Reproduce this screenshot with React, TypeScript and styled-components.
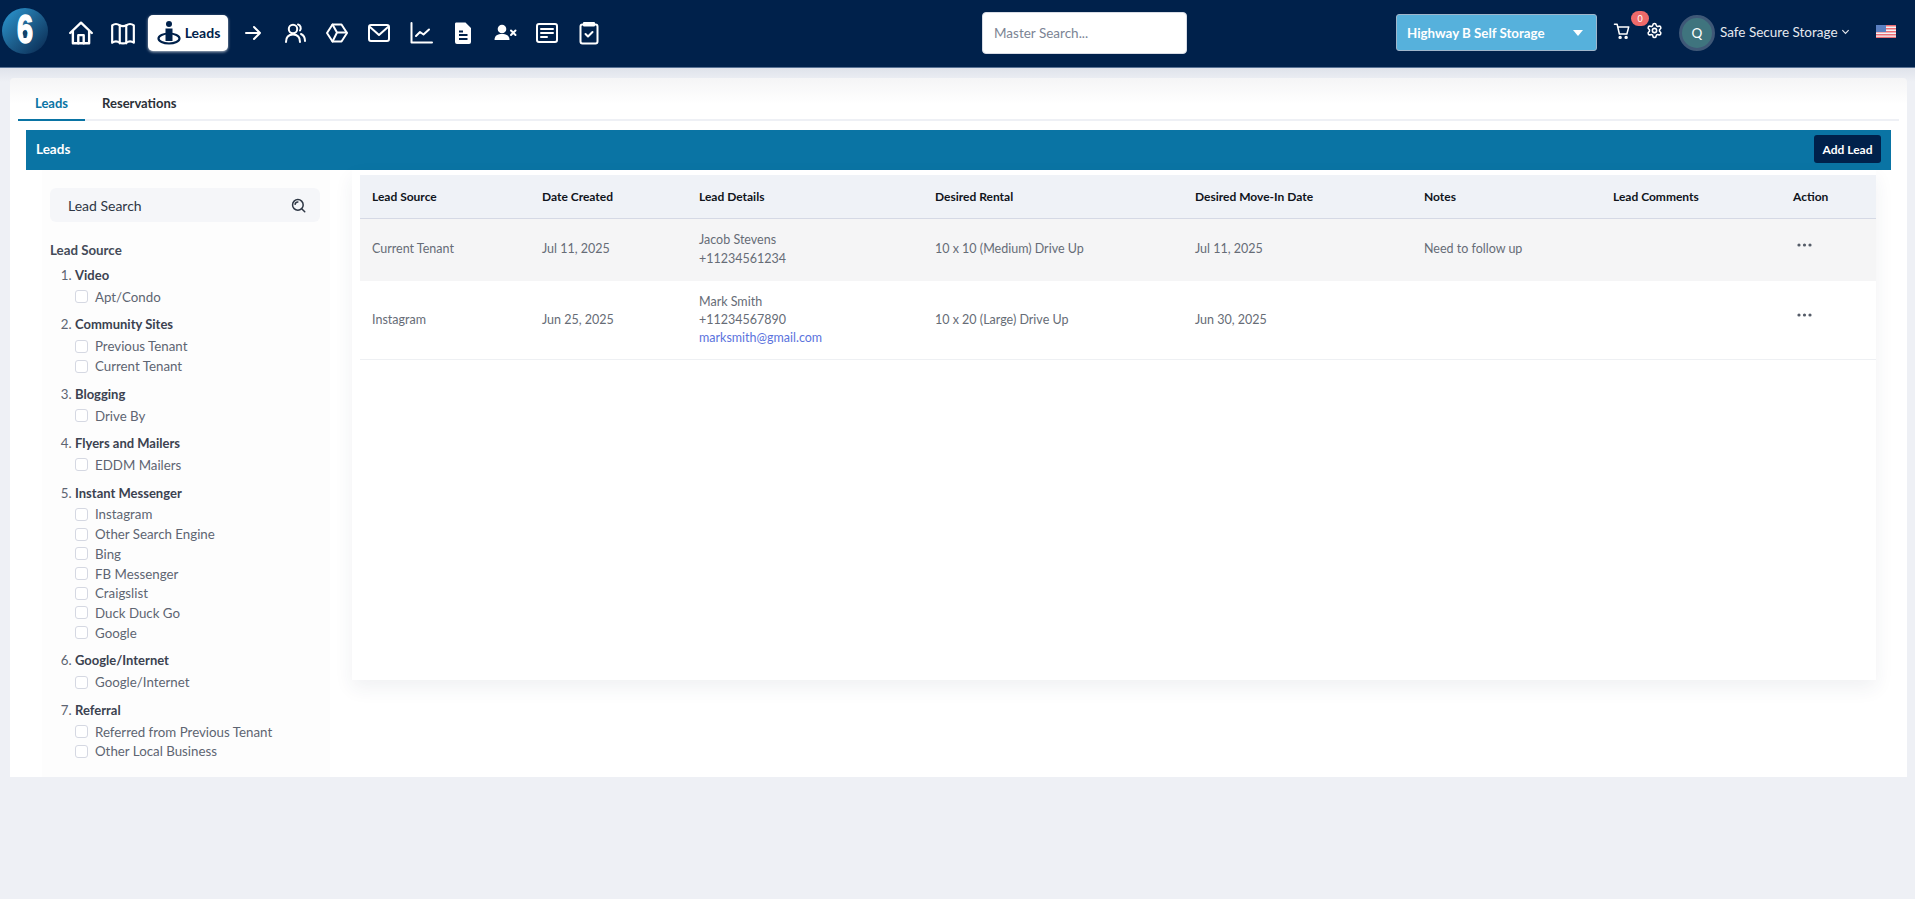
import React from "react";
import styled, { createGlobalStyle } from "styled-components";
import { Settings } from "lucide-react";

const navy = "#00214b";
const font = `"Lato", "Noto Sans", sans-serif`;

const Global = createGlobalStyle`
  html, body { margin: 0; padding: 0; background: #eef0f5; font-family: ${font}; }
  * { box-sizing: border-box; }
`;

const Page = styled.div`
  width: 1915px;
  height: 899px;
  overflow: hidden;
`;

const TopBar = styled.header`
  height: 68px;
  padding-bottom: 2px;
  background: ${navy};
  border-bottom: 1px solid #5a7396;
  display: flex;
  align-items: center;
`;

const Logo = styled.svg`
  width: 48px;
  height: 48px;
  margin-left: 1px;
  margin-top: -3px;
  flex: none;
`;

const IconNav = styled.nav`
  display: flex;
  align-items: center;
  margin-left: 11px;
  width: 549px;
  flex: none;
`;

const NavIcon = styled.span`
  width: 42px;
  height: 36px;
  flex: none;
  display: flex;
  align-items: center;
  justify-content: center;
  color: #fff;
  svg { display: block; }
`;

const LeadsPill = styled.span`
  width: 80px;
  height: 36px;
  margin: 0 4px;
  flex: none;
  border-radius: 5px;
  background: #fff;
  color: ${navy};
  box-shadow: 0 1px 3px rgba(255, 255, 255, 0.7);
  display: flex;
  align-items: center;
  justify-content: center;
  gap: 3px;
  font-size: 14px;
  font-weight: 700;
`;

const SearchField = styled.div`
  width: 205px;
  height: 42px;
  margin-left: 373px;
  flex: none;
  background: #fff;
  border-radius: 4px;
  border: 1px solid #d8dce5;
  display: flex;
  align-items: center;
  padding-left: 11px;
  font-size: 13.5px;
  color: #7b8494;
`;

const SiteSelect = styled.div`
  width: 201px;
  height: 37px;
  margin-left: 209px;
  flex: none;
  border-radius: 3px;
  background: #56b1dc;
  border: 1px solid #9fb6cb;
  display: flex;
  align-items: center;
  justify-content: space-between;
  padding: 0 13px 0 10px;
  color: #fff;
  font-size: 13.3px;
  font-weight: 700;
`;

const Caret = styled.span`
  width: 0;
  height: 0;
  border-left: 5px solid transparent;
  border-right: 5px solid transparent;
  border-top: 6px solid #fff;
`;

const CartWrap = styled.span`
  position: relative;
  margin: -3px 0 0 16px;
  width: 18px;
  height: 18px;
  color: #fff;
  flex: none;
  svg { display: block; }
`;

const Badge = styled.span`
  position: absolute;
  left: 18px;
  top: -11px;
  width: 18px;
  height: 15px;
  border-radius: 8px;
  background: #ef6a6a;
  color: #fff;
  font-size: 9px;
  display: flex;
  align-items: center;
  justify-content: center;
`;

const GearWrap = styled.span`
  margin: -4px 0 0 15px;
  width: 17px;
  height: 17px;
  color: #fff;
  flex: none;
  svg { display: block; }
`;

const Avatar = styled.span`
  margin-left: 16px;
  width: 36px;
  height: 36px;
  border-radius: 50%;
  background: #3f747e;
  border: 3px solid #3f5877;
  color: #fff;
  font-size: 13.5px;
  flex: none;
  display: flex;
  align-items: center;
  justify-content: center;
`;

const UserName = styled.span`
  margin: -2px 0 0 5px;
  width: 118px;
  flex: none;
  color: #e6e9ef;
  font-size: 13.5px;
  white-space: nowrap;
`;

const Chevron = styled.svg`
  margin: -2px 0 0 3px;
  width: 9px;
  height: 9px;
  flex: none;
`;

const Flag = styled.svg`
  margin: -2px 0 0 26px;
  width: 20px;
  height: 13px;
  flex: none;
`;

const Main = styled.main`
  padding: 10px 8px 0 10px;
  background: linear-gradient(#dfe3eb, #eef0f5 14px);
`;

const Card = styled.section`
  background: linear-gradient(#f5f5f6, #fff 26px);
  border-radius: 4px 4px 0 0;
  padding: 12px 8px 0;
  height: 699px;
`;

const Tabs = styled.div`
  display: flex;
  height: 31px;
  border-bottom: 2px solid #eef0f5;
`;

const Tab = styled.div<{ $active?: boolean }>`
  height: 31px;
  padding: 0 17px;
  font-size: 13px;
  font-weight: 700;
  line-height: 26px;
  color: ${(p) => (p.$active ? "#0a74a4" : "#2b3038")};
  border-bottom: 2px solid ${(p) => (p.$active ? "#0a74a4" : "transparent")};
`;

const Bar = styled.div`
  margin: 9px 8px 0;
  height: 40px;
  background: #0a74a4;
  display: flex;
  align-items: center;
  justify-content: space-between;
  padding: 0 10px 2px;
  color: #fff;
  font-size: 13.5px;
  font-weight: 700;
`;

const AddButton = styled.button`
  width: 67px;
  height: 28px;
  border: 0;
  border-radius: 3px;
  background: ${navy};
  color: #fff;
  font: 700 12px ${font};
  padding: 0;
`;

const Body = styled.div`
  display: flex;
  margin: 0 15px 0 8px;
  align-items: flex-start;
`;

const Side = styled.aside`
  width: 288px;
  height: 607px;
  margin-left: 16px;
  padding: 18px 10px 0 8px;
  flex: none;
  background: #fdfdfd;
`;

const LeadSearch = styled.div`
  height: 34px;
  border-radius: 6px;
  background: #f5f6f9;
  display: flex;
  align-items: center;
  justify-content: space-between;
  padding: 0 14px 0 18px;
  font-size: 14px;
  color: #2e3745;
  svg { display: block; }
`;

const SideLabel = styled.div`
  margin-top: 18px;
  font-size: 13.3px;
  line-height: 20px;
  font-weight: 700;
  color: #444b58;
`;

const Sources = styled.ol`
  list-style: decimal;
  margin: 5px 0 0;
  padding: 0 0 0 25px;
  color: #5e6572;
  font-size: 13.3px;
`;

const Source = styled.li`
  margin-bottom: 7.8px;
`;

const SourceName = styled.div`
  line-height: 20px;
  font-size: 13px;
  font-weight: 700;
  color: #3b4250;
`;

const Option = styled.label`
  display: flex;
  align-items: center;
  gap: 7px;
  height: 19.7px;
  color: #5e6572;
  &:first-of-type { margin-top: 2px; }
`;

const Check = styled.span`
  width: 13px;
  height: 13px;
  flex: none;
  border: 1px solid #d5d8e2;
  border-radius: 3px;
  background: #fff;
`;

const TableCard = styled.div`
  margin-left: 22px;
  width: 1524px;
  flex: none;
  height: 510px;
  padding: 5px 0 0 8px;
  background: #fff;
  box-shadow: 0 8px 18px rgba(40, 50, 80, 0.07);
`;

const Table = styled.table`
  width: 1516px;
  table-layout: fixed;
  border-collapse: collapse;
  th:nth-child(1) { width: 170px; }
  th:nth-child(2) { width: 157px; }
  th:nth-child(3) { width: 236px; }
  th:nth-child(4) { width: 260px; }
  th:nth-child(5) { width: 229px; }
  th:nth-child(6) { width: 189px; }
  th:nth-child(7) { width: 180px; }
  th:nth-child(8) { width: 95px; }
`;

const HeadRow = styled.tr`
  height: 43px;
  background: #eff2f7;
  border-bottom: 1px solid #d5d9e5;
`;

const Th = styled.th`
  padding: 0 12px;
  text-align: left;
  font-size: 12px;
  font-weight: 700;
  color: #10141c;
`;

const Row = styled.tr<{ $striped?: boolean; $height: number }>`
  height: ${(p) => p.$height}px;
  background: ${(p) => (p.$striped ? "#f5f5f6" : "#fff")};
  border-bottom: 1px solid ${(p) => (p.$striped ? "transparent" : "#eef0f3")};
`;

const Td = styled.td`
  padding: 0 12px;
  font-size: 12.5px;
  line-height: 18.3px;
  color: #666c76;
`;

const Email = styled.div`
  color: #5b73dd;
`;

const Dots = styled.svg`
  display: block;
  width: 15px;
  height: 4px;
  margin: 0 0 10px 4px;
`;

const stroke = {
  fill: "none",
  stroke: "currentColor",
  strokeWidth: 2,
  strokeLinecap: "round" as const,
  strokeLinejoin: "round" as const,
};

const icons: React.ReactNode[] = [
  <g key="arrow" {...stroke}><path d="M5 12h14M13 6l6 6-6 6" /></g>,
  <g key="users" {...stroke}><circle cx="10" cy="8" r="4.2" /><path d="M3 21c0-5 3-7.5 7-7.5s7 2.5 7 7.5M15 3.5c2.5.6 3.6 3.8 2 6M18 13c2.6 1.2 4 3.5 4 7" /></g>,
  <g key="box" {...stroke}><path d="M7.5 3.5h9L22 12l-5.500 8.500h-9L2 12z" /><path d="M7.500 3.500 12 11.500h9.500M12 11.500 7.500 20.500" /></g>,
  <g key="mail" {...stroke}><rect x="2" y="4" width="20" height="16" rx="2" /><path d="m3 6 9 8 9-8" /></g>,
  <g key="chart" {...stroke}><path d="M2.500 2v19.500H23" /><path d="m7 15 4-4 3.500 2.500L20 8.500" /></g>,
  <g key="file"><path fill="currentColor" d="M5 1.500h9.500L20 7v14a2 2 0 0 1-2 2H6a2 2 0 0 1-2-2V3a1.500 1.500 0 0 1 1-1.500z" /><path stroke={navy} strokeWidth="1.800" d="M8 10.500h4M8 14h8.500M8 18h8.500" /></g>,
  <g key="userx"><circle cx="9" cy="8" r="4.300" fill="currentColor" /><path fill="currentColor" d="M1.500 19c0-4.500 3.300-6 7.500-6s7.500 1.500 7.500 6z" /><path stroke="currentColor" strokeWidth="2" strokeLinecap="round" d="m18 9.500 4.500 4.500m0-4.500L18 14" /></g>,
  <g key="list" {...stroke}><rect x="2" y="3" width="20" height="18" rx="2" /><path d="M6 8h12M6 12h12M6 16h6" /></g>,
  <g key="clip" {...stroke}><rect x="3.500" y="3.500" width="17" height="19" rx="2" /><path d="M7 2h10v2.500H7zM8.500 13l2.500 2.500 4.500-4.500" /></g>,
];

const groups: [string, string[]][] = [
  ["Video", ["Apt/Condo"]],
  ["Community Sites", ["Previous Tenant", "Current Tenant"]],
  ["Blogging", ["Drive By"]],
  ["Flyers and Mailers", ["EDDM Mailers"]],
  ["Instant Messenger", ["Instagram", "Other Search Engine", "Bing", "FB Messenger", "Craigslist", "Duck Duck Go", "Google"]],
  ["Google/Internet", ["Google/Internet"]],
  ["Referral", ["Referred from Previous Tenant", "Other Local Business"]],
];

const columns = ["Lead Source", "Date Created", "Lead Details", "Desired Rental", "Desired Move-In Date", "Notes", "Lead Comments", "Action"];

const MoreDots = () => (
  <Dots viewBox="0 0 15 4">
    <circle cx="2" cy="2" r="1.600" fill="#555c68" />
    <circle cx="7.500" cy="2" r="1.600" fill="#555c68" />
    <circle cx="13" cy="2" r="1.600" fill="#555c68" />
  </Dots>
);

export default function App() {
  return (
    <Page>
      <Global />
      <TopBar>
        <Logo viewBox="0 0 48 48">
          <defs>
            <linearGradient id="lg" x1="0" y1="0" x2="1" y2="1">
              <stop offset="0" stopColor="#2b9ad6" />
              <stop offset="0.5" stopColor="#1d5f8d" />
              <stop offset="1" stopColor="#08264e" />
            </linearGradient>
          </defs>
          <circle cx="24" cy="24" r="23" fill="url(#lg)" />
          <text transform="translate(24 36) scale(0.72 1)" textAnchor="middle" fontFamily="Liberation Sans, sans-serif" fontWeight="700" fontSize="40" fill="#fff" stroke="#fff" strokeWidth="1.500">6</text>
          <circle cx="24" cy="26" r="2.300" fill="#12406b" />
          <path d="M23 26h2l.5 5h-3z" fill="#12406b" />
        </Logo>
        <IconNav>
          <NavIcon>
            <svg width="26" height="26" viewBox="0 0 24 24" {...stroke} strokeWidth="2.200">
              <path d="M2 12 12 2.500 22 12M4.500 10v11.500h15V10" />
              <path d="M9.500 21.500V14h5v7.500" />
            </svg>
          </NavIcon>
          <NavIcon>
            <svg width="26" height="26" viewBox="0 0 24 24" {...stroke}>
              <path d="M2 5c2-1.500 5-1.500 7 0 1 .8 5 .8 6 0 2-1.500 5-1.500 7 0v16c-2-1.500-5-1.500-7 0-1 .8-5 .8-6 0-2-1.500-5-1.500-7 0z" />
              <path d="M9 5v16.500M15 5v16.500" />
            </svg>
          </NavIcon>
          <LeadsPill>
            <svg width="26" height="26" viewBox="0 0 26 26" fill={navy}>
              <circle cx="13" cy="4" r="3" />
              <ellipse cx="13" cy="18.500" rx="10.500" ry="5" fill="none" stroke={navy} strokeWidth="2.200" />
              <path d="M9.500 8.500h7V21h-7z" />
            </svg>
            Leads
          </LeadsPill>
          {icons.map((icon, i) => (
            <NavIcon key={i}>
              <svg width="24" height="24" viewBox="0 0 24 24">{icon}</svg>
            </NavIcon>
          ))}
        </IconNav>
        <SearchField>Master Search...</SearchField>
        <SiteSelect>
          Highway B Self Storage
          <Caret />
        </SiteSelect>
        <CartWrap>
          <svg width="18" height="18" viewBox="0 0 24 24" {...stroke}>
            <path d="M2 3h3.500l3 13h10l2.500-9.500H6.500" />
            <circle cx="9.500" cy="20.500" r="1.300" />
            <circle cx="17.500" cy="20.500" r="1.300" />
          </svg>
          <Badge>0</Badge>
        </CartWrap>
        <GearWrap>
          <Settings size={17} strokeWidth={2.2} />
        </GearWrap>
        <Avatar>Q</Avatar>
        <UserName>Safe Secure Storage</UserName>
        <Chevron viewBox="0 0 10 10"><path d="m1.500 3.500 3.500 3.500 3.500-3.500" fill="none" stroke="#e6e9ef" strokeWidth="1.300" /></Chevron>
        <Flag viewBox="0 0 20 13">
          <rect width="20" height="13" fill="#f3f4f6" />
          <path d="M0 0h20v1.500H0zM0 3h20v1.500H0zM0 6h20v1.500H0zM0 9h20v1.500H0zM0 11.800h20V13H0z" fill="#ec6d74" />
          <rect width="10" height="7" fill="#5a7fc0" />
        </Flag>
      </TopBar>
      <Main>
        <Card>
          <Tabs>
            <Tab $active>Leads</Tab>
            <Tab>Reservations</Tab>
          </Tabs>
          <Bar>
            Leads
            <AddButton>Add Lead</AddButton>
          </Bar>
          <Body>
            <Side>
              <LeadSearch>
                Lead Search
                <svg width="15" height="15" viewBox="0 0 24 24" {...stroke} strokeWidth="2.400" color="#2e3745">
                  <circle cx="11" cy="11" r="8.500" />
                  <path d="m17.500 17.500 4.500 4.500M6.500 10a4.500 4.500 0 0 1 4.500-3.500" />
                </svg>
              </LeadSearch>
              <SideLabel>Lead Source</SideLabel>
              <Sources>
                {groups.map(([name, items]) => (
                  <Source key={name}>
                    <SourceName>{name}</SourceName>
                    {items.map((item) => (
                      <Option key={item}>
                        <Check />
                        {item}
                      </Option>
                    ))}
                  </Source>
                ))}
              </Sources>
            </Side>
            <TableCard>
              <Table>
                <thead>
                  <HeadRow>
                    {columns.map((c) => <Th key={c}>{c}</Th>)}
                  </HeadRow>
                </thead>
                <tbody>
                  <Row $striped $height={63}>
                    <Td>Current Tenant</Td>
                    <Td>Jul 11, 2025</Td>
                    <Td>
                      <div>Jacob Stevens</div>
                      <div>+11234561234</div>
                    </Td>
                    <Td>10 x 10 (Medium) Drive Up</Td>
                    <Td>Jul 11, 2025</Td>
                    <Td>Need to follow up</Td>
                    <Td />
                    <Td><MoreDots /></Td>
                  </Row>
                  <Row $height={78}>
                    <Td>Instagram</Td>
                    <Td>Jun 25, 2025</Td>
                    <Td>
                      <div>Mark Smith</div>
                      <div>+11234567890</div>
                      <Email>marksmith@gmail.com</Email>
                    </Td>
                    <Td>10 x 20 (Large) Drive Up</Td>
                    <Td>Jun 30, 2025</Td>
                    <Td />
                    <Td />
                    <Td><MoreDots /></Td>
                  </Row>
                </tbody>
              </Table>
            </TableCard>
          </Body>
        </Card>
      </Main>
    </Page>
  );
}
